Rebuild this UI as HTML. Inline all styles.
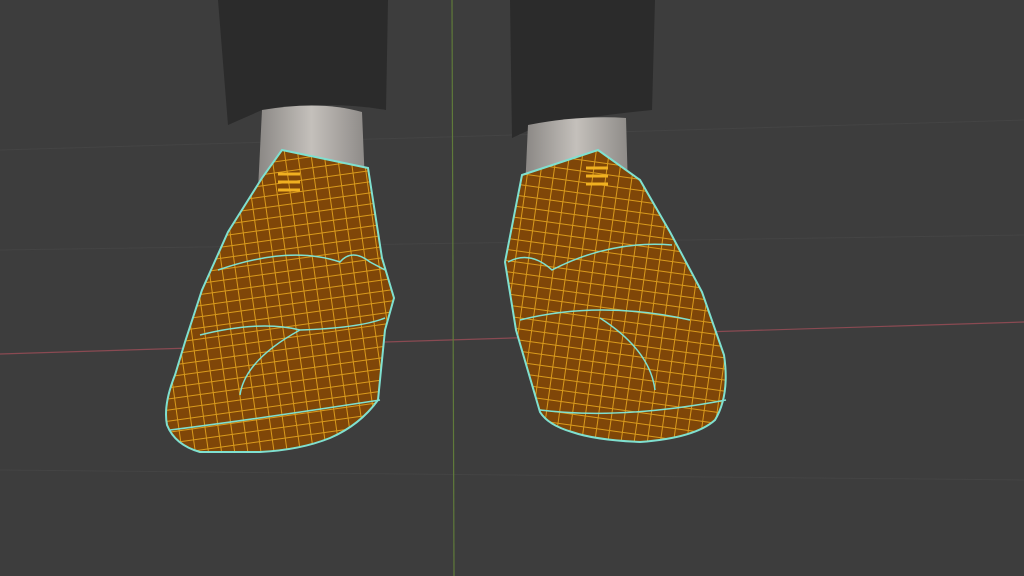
<!DOCTYPE html>
<html><head><meta charset="utf-8"><style>
html,body{margin:0;padding:0;background:#3d3d3d;overflow:hidden}
svg{display:block}
</style></head><body>
<svg width="1024" height="576" viewBox="0 0 1024 576" xmlns="http://www.w3.org/2000/svg">
<defs>
<pattern id="wire" width="13" height="11" patternUnits="userSpaceOnUse" patternTransform="rotate(-8)">
<rect width="13" height="11" fill="#7f4608"/>
<path d="M0 0.5H13M0.5 0V11" stroke="#d99a1c" stroke-width="1"/>
</pattern>
<pattern id="wire2" width="13" height="11" patternUnits="userSpaceOnUse" patternTransform="rotate(8)">
<rect width="13" height="11" fill="#7f4608"/>
<path d="M0 0.5H13M0.5 0V11" stroke="#d99a1c" stroke-width="1"/>
</pattern>
<linearGradient id="ank" x1="0" x2="1"><stop offset="0" stop-color="#8a8784"/><stop offset="0.5" stop-color="#c4c0bb"/><stop offset="1" stop-color="#8e8b88"/></linearGradient>
</defs>
<rect width="1024" height="576" fill="#3d3d3d"/>
<g stroke="#444" stroke-width="1">
<path d="M0 150L1024 120M0 250L1024 235M0 470L1024 480"/>
</g>
<path d="M0 354L1024 322" stroke="#8a4a52" stroke-width="1.2"/>
<path d="M452 0L454 576" stroke="#5f7a3a" stroke-width="1.2"/>
<path d="M218 0H388L386 110Q330 100 262 110L228 125Z" fill="#2b2b2b"/>
<path d="M510 0H655L652 110Q600 115 540 125L512 138Z" fill="#2b2b2b"/>
<path d="M262 110Q320 100 362 112L365 185L258 190Z" fill="url(#ank)"/>
<path d="M528 125Q580 115 626 118L628 190L525 190Z" fill="url(#ank)"/>
<path d="M282 150L368 168L382 258L394 298L385 330L378 400Q360 425 330 438Q300 450 260 452L200 452Q175 445 167 425Q163 405 175 375L185 342L202 290L228 232L262 178Z" fill="url(#wire)" stroke="#7fe0d0" stroke-width="2"/>
<path d="M218 270Q290 245 340 262Q352 248 370 262L385 270M200 335Q260 320 300 330Q360 328 385 318M240 395Q245 360 300 330M170 430Q250 420 380 400" fill="none" stroke="#7fe0d0" stroke-width="1.5"/>
<path d="M522 175L598 150L640 180L670 232L702 292L724 355Q730 395 715 420Q695 438 640 442Q595 440 572 432Q548 425 540 412L516 330L505 262Z" fill="url(#wire2)" stroke="#7fe0d0" stroke-width="2"/>
<path d="M508 262Q530 250 552 270Q610 240 672 245M520 320Q600 300 690 320M655 390Q650 350 600 318M540 410Q620 420 726 400" fill="none" stroke="#7fe0d0" stroke-width="1.5"/>
<g stroke="#f0b020" stroke-width="3" fill="none">
<path d="M278 174h22M278 182h22M278 190h22M586 168h22M586 176h22M586 184h22"/>
</g>
</svg>
</body></html>
